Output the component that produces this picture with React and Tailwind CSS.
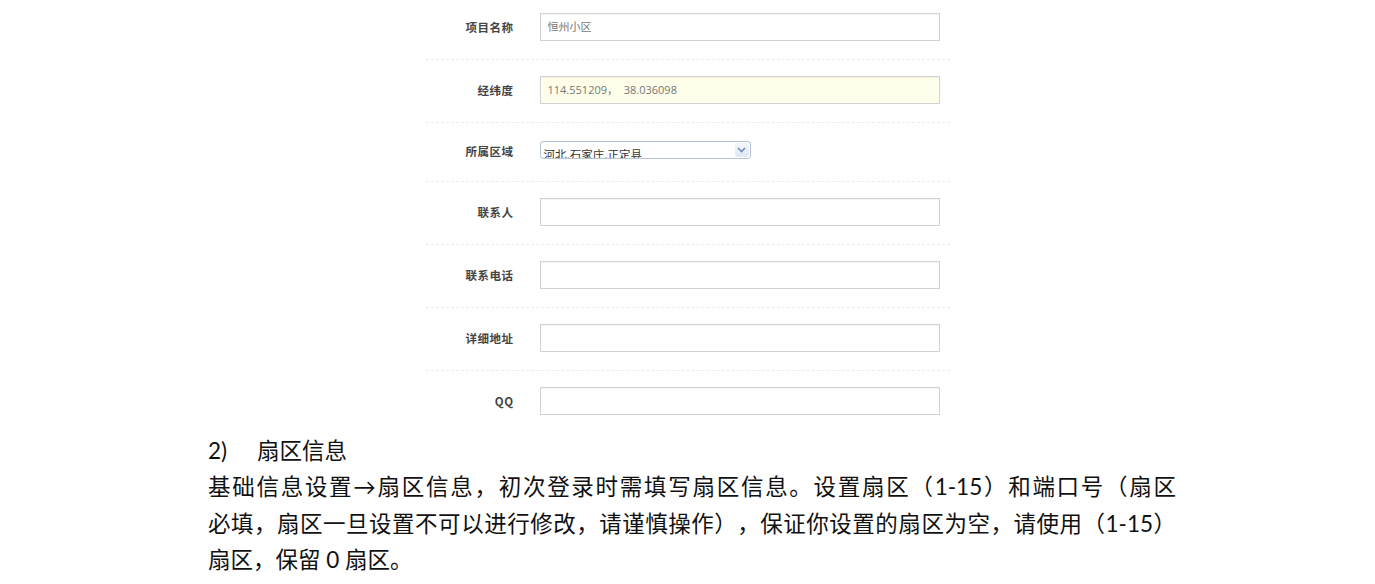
import React from "react";

const labelFont = { fontFamily: '"Noto Sans CJK SC", "Liberation Sans", sans-serif' };

function Row({ label, children, first, last, select }) {
  return (
    <div
      className={`flex items-start ${first ? "pt-[13px]" : select ? "pt-[18px]" : "pt-4"} ${
        last ? "pb-0" : select ? "pb-[22px]" : "pb-[18px]"
      } ${last ? "" : "border-b border-dashed border-[#ececec]"}`}
    >
      <div
        className={`w-[88px] shrink-0 text-right text-[11.5px] font-bold text-[#444] tracking-[0.5px] ${
          select ? "leading-[15px] pt-[3px]" : "leading-[28px]"
        }`}
        style={labelFont}
      >
        {label}
      </div>
      <div className="ml-[26px]">{children}</div>
    </div>
  );
}

function Input({ value, yellow }) {
  return (
    <div
      className={`w-[400px] h-[28px] border border-[#d2d2d2] shadow-[inset_0_1px_1px_rgba(0,0,0,0.04)] flex items-center px-[7px] text-[11px] text-[#777] whitespace-pre ${
        yellow ? "bg-[#fefeea]" : "bg-white"
      }`}
      style={{ fontFamily: '"Open Sans", "Noto Sans CJK SC", sans-serif' }}
    >
      {value}
    </div>
  );
}

function Select() {
  return (
    <div className="relative w-[211px] h-[18px] border border-[#b4c3d6] rounded-[3px] bg-white overflow-hidden">
      <div
        className="absolute left-[3px] top-[4px] text-[11.5px] leading-[16px] text-[#333]"
        style={labelFont}
      >
        河北,石家庄,正定县
      </div>
      <div className="absolute right-[1px] top-[1px] w-[14px] h-[14px] rounded-[2px] bg-gradient-to-b from-[#f4f7fb] to-[#dfe7f1] flex items-center justify-center">
        <svg width="9" height="6" viewBox="0 0 9 6">
          <path d="M1 1 L4.5 4.5 L8 1" fill="none" stroke="#6f8fb8" strokeWidth="1.6" />
        </svg>
      </div>
    </div>
  );
}

export default function App() {
  const bodyFont = { fontFamily: 'Lato, "Noto Sans CJK SC", sans-serif' };
  return (
    <div className="w-[1375px] h-[584px] bg-white overflow-hidden">
      <div className="w-[524px] mx-auto">
        <Row label="项目名称" first>
          <Input value="恒州小区" />
        </Row>
        <Row label="经纬度">
          <Input value="114.551209，  38.036098" yellow />
        </Row>
        <Row label="所属区域" select>
          <Select />
        </Row>
        <Row label="联系人">
          <Input />
        </Row>
        <Row label="联系电话">
          <Input />
        </Row>
        <Row label="详细地址">
          <Input />
        </Row>
        <Row label="QQ" last>
          <Input />
        </Row>
      </div>
      <div
        className="ml-[208px] w-[968px] mt-[18px] text-[22.5px] leading-[36.3px] text-[#111] [text-spacing-trim:space-all]"
        style={bodyFont}
      >
        <div className="flex">
          <span className="w-[49px]">2)</span>
          <span>扇区信息</span>
        </div>
        <div className="text-justify [text-align-last:justify] whitespace-nowrap">
          基础信息设置→扇区信息，初次登录时需填写扇区信息。设置扇区（1-15）和端口号（扇区
        </div>
        <div className="text-justify [text-align-last:justify] whitespace-nowrap">
          必填，扇区一旦设置不可以进行修改，请谨慎操作），保证你设置的扇区为空，请使用（1-15）
        </div>
        <div>扇区，保留 0 扇区。</div>
      </div>
    </div>
  );
}
